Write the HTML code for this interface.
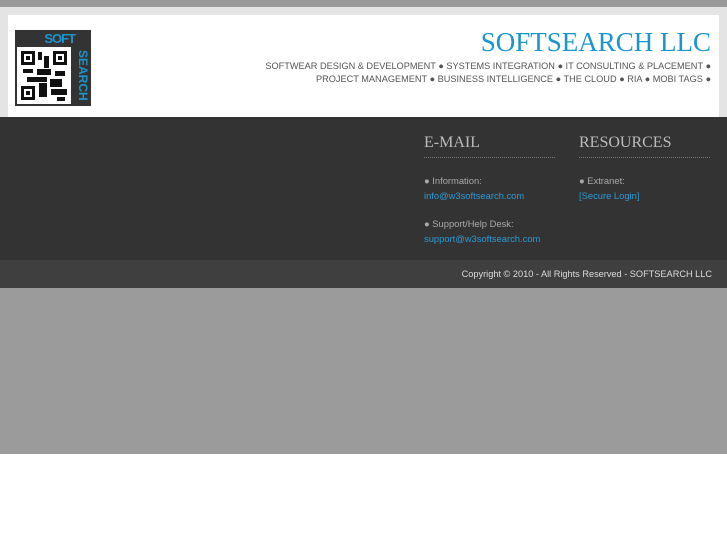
<!DOCTYPE html>
<html><head><style>
body{margin:0;width:727px;height:545px;background:#fff;font-family:"Liberation Sans",sans-serif;position:relative;overflow:hidden}
.top{position:absolute;left:0;top:0;width:727px;height:117px;background:#e4e4e4}
.top .strip{position:absolute;left:0;top:0;width:727px;height:7px;background:#9a9a9a}
.panel{position:absolute;left:8px;top:15px;width:711px;height:102px;background:#fff}
.logo{position:absolute;left:15px;top:30px;width:76px;height:76px;background:#333}
.logo .qr{position:absolute;left:2px;top:17px;width:54px;height:57px;background:#fff}
.title{position:absolute;right:16px;top:27px;font-family:"Liberation Serif",serif;font-size:27px;color:#1a96cf}
.nav{position:absolute;right:16px;top:60px;text-align:right;font-size:9.2px;line-height:13px;color:#555}
.dark{position:absolute;left:0;top:117px;width:727px;height:143px;background:#333}
.foot{position:absolute;left:0;top:260px;width:727px;height:28px;background:#3f3f3f;color:#ddd;font-size:9.2px}
.gray{position:absolute;left:0;top:288px;width:727px;height:166px;background:#9b9b9b}
.col{position:absolute;top:134px;width:131px;color:#aaa;font-size:9.4px}
.col h2{margin:0;font-family:"Liberation Serif",serif;font-weight:normal;font-size:16px;color:#bbb;padding-bottom:5px;border-bottom:1px dotted #777;margin-bottom:17px}
.col a{color:#2a9ad6;display:block;margin-top:4px}
.col p{margin:0 0 17px}
</style></head><body>
<div class="top"><div class="strip"></div></div>
<div class="panel"></div>
<div class="logo">
<div style="position:absolute;right:16px;top:1px;color:#1a96cf;font-size:13px;font-weight:bold;letter-spacing:-1px">SOFT</div>
<div style="position:absolute;right:0;top:20px;width:16px;height:56px;color:#1a96cf;font-size:12px;font-weight:bold;writing-mode:vertical-rl;line-height:16px">SEARCH</div>
<div class="qr"><svg width="54" height="57"><g fill="#111"><rect x="4" y="4" width="14" height="14"/><rect x="7" y="7" width="8" height="8" fill="#fff"/><rect x="9" y="9" width="4" height="4"/><rect x="36" y="4" width="14" height="14"/><rect x="39" y="7" width="8" height="8" fill="#fff"/><rect x="41" y="9" width="4" height="4"/><rect x="4" y="39" width="14" height="14"/><rect x="7" y="42" width="8" height="8" fill="#fff"/><rect x="9" y="44" width="4" height="4"/><rect x="21" y="5" width="4" height="8"/><rect x="27" y="9" width="5" height="12"/><rect x="6" y="22" width="10" height="4"/><rect x="20" y="22" width="14" height="6"/><rect x="38" y="24" width="10" height="5"/><rect x="10" y="30" width="20" height="5"/><rect x="22" y="36" width="8" height="14"/><rect x="33" y="32" width="12" height="8"/><rect x="34" y="42" width="16" height="6"/><rect x="40" y="50" width="8" height="4"/></g></svg></div>
</div>
<div class="title">SOFTSEARCH LLC</div>
<div class="nav">SOFTWEAR DESIGN &amp; DEVELOPMENT ● SYSTEMS INTEGRATION ● IT CONSULTING &amp; PLACEMENT ●<br>PROJECT MANAGEMENT ● BUSINESS INTELLIGENCE ● THE CLOUD ● RIA ● MOBI TAGS ●</div>
<div class="dark"></div>
<div class="col" style="left:424px"><h2>E-MAIL</h2><p>● Information:<a>info@w3softsearch.com</a></p><p>● Support/Help Desk:<a>support@w3softsearch.com</a></p></div>
<div class="col" style="left:579px"><h2>RESOURCES</h2><p>● Extranet:<a>[Secure Login]</a></p></div>
<div class="foot"><span style="position:absolute;right:15px;top:9px">Copyright © 2010 - All Rights Reserved - SOFTSEARCH LLC</span></div>
<div class="gray"></div>
</body></html>
